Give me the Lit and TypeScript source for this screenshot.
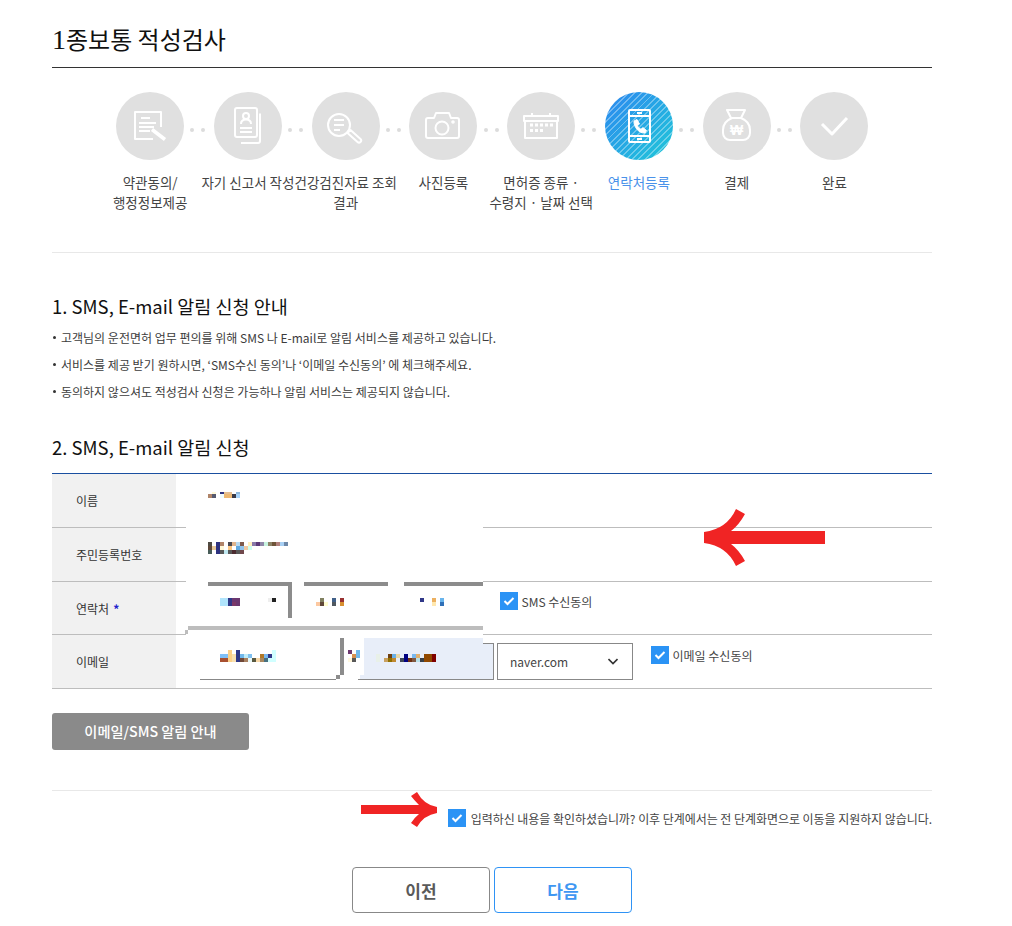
import { LitElement, html, css, svg } from "lit";
import { customElement } from "lit/decorators.js";

const ICONS = [
  svg`<path d="M37 47H19V20H45V35"/><path d="M25 26h9M23 31h17M23 35h15M23 39h11"/><path d="M36 37.500L49 47.500" stroke-width="3.500"/>`,
  svg`<rect x="21" y="16" width="22" height="29" rx="2"/><path d="M46 21.500V49a2 2 0 0 1-2 2H27"/><circle cx="32" cy="24" r="3"/><path d="M27 32c0-3.500 2-4.500 5-4.500s5 1 5 4.500"/><path d="M26 36h12M26 40h12"/>`,
  svg`<circle cx="27" cy="33" r="11"/><path d="M22 28h10M22 33h10M22 38h6"/><path d="M35.500 41l3-3 10 9a2 2 0 0 1-3 3z"/>`,
  svg`<path d="M19 26h6l2-5h13l2 5h6a2 2 0 0 1 2 2v16a2 2 0 0 1-2 2H19a2 2 0 0 1-2-2V28a2 2 0 0 1 2-2z"/><circle cx="33" cy="36" r="6.500"/><circle cx="44" cy="30" r=".8"/>`,
  svg`<path d="M18 29h32v17H18zM17 24h34v5H17zM25 21v4M43 21v4" /><path stroke-width="3" stroke-dasharray="3 2" d="M23 33h24M23 38.500h15"/>`,
  svg`<rect x="24" y="18" width="21" height="32" rx="1"/><path d="M24 24h21M24 44h21M32 47h5M32 21h5"/><path fill="#fff" stroke-width="1" d="M29 29l3-1.500 2.500 4.500-2 1.500c.6 1.700 1.800 3 3.500 3.800l1.800-1.800 3.700 3-1.500 2.500c-6 .5-11.500-6-11-12z"/>`,
  svg`<path d="M24 18h18l-4 8H28z"/><path d="M29 26h9c5 2 9 6 9 12v3a7 7 0 0 1-7 7H27a7 7 0 0 1-7-7v-3c0-6 4-10 9-12z"/><text x="33.500" y="42.500" font-size="14" font-weight="700" text-anchor="middle" fill="#fff" stroke="none" font-family="Liberation Sans, sans-serif">₩</text>`,
  svg`<path stroke-width="3" d="M22 32l10 10 15-16"/>`,
];

const STEPS = [
  ["약관동의/", "행정정보제공"],
  ["자기 신고서 작성"],
  ["건강검진자료 조회", "결과"],
  ["사진등록"],
  ["면허증 종류 ·", "수령지 · 날짜 선택"],
  ["연락처등록"],
  ["결제"],
  ["완료"],
];

type Row = [number, string];
const MOSAICS: Record<string, Row[]> = {
  name: [
    [2, "- fff8d8 - 2e3380 e3be93 e3be93 - 8fb8dc"],
    [4, "b08468 565a70 - f0fdff edb873 edb873 3a3a48 a8d3fa"],
  ],
  rrn: [
    [4, "4f4a42 - 2e3380 b08468 - 4a4a52 e0b48c b8d8ee 7d5a4c - fff0c0 8878a8 5c3a78 8f88a8 c8f4e0 8c8468 6e5438 b0807c a8d0f4 6e88a8"],
    [4, "5c4638 e8c898 2e3380 fff8d8 - fcc884 - 60a8e0 90c4ec f0c8a0 d0fff0"],
    [4, "485c58 - 2e3380 585858 c0e8f0 585858 4c2c30 585858 70484c"],
  ],
  p1: [
    [4, "b0e4fc b0e4fc 303888 6c3870 6c3870 - - - - - - - eeeeee 222222"],
    [4, "b0e4fc b0e4fc 303888 7c3868 6c3870"],
  ],
  p2: [
    [4, "- 808060 - - 406088 - 983030"],
    [4, "fcc8a0 604838 fffdd0 - 505860 - d89030"],
  ],
  p3: [
    [4, "303888 - - ecb060 - 68b4ec"],
    [4, "- - - ffe8b0 - 3070b8"],
  ],
  e1: [
    [4, "- - fcd088 - 303888 - - - - - - - - d0ffff"],
    [4, "80c0f8 80c0f8 fcd088 f8e0b0 303888 70b8ec c0ecf8 80c0f0 - - b07828 78b8f0 303888 d0ffff"],
    [4, "a85030 a85030 fcd088 f8e0b0 303888 704838 a88060 e8f8f8 585840 f8d8a8 a88860 487080 d0ffff d0ffff"],
  ],
  em: [
    [4, "6c3870 - 70b8ec"],
    [4, "- d89050 70b8ec"],
    [4, "fff8e0 585858"],
  ],
  e2: [
    [4, "e8f0e8 - - 704010 68b0e8 e8d8a8 - 000080 - 78b8f0 e0b070 - 904800 904800 800000"],
    [4, "e8f0e8 - c8a060 907000 c08830 - 404858 000080 703010 805840 b8e0e8 384048 904800 904800 800000"],
  ],
};

@customElement("app-root")
export class AppRoot extends LitElement {
  static styles = css`
    :host {
      display: block;
      font-family: "Noto Sans CJK KR", "Noto Sans", sans-serif;
      color: #333;
    }
    * { box-sizing: border-box; }
    .page { width: 880px; margin-left: 52px; height: 926px; position: relative; }
    h1 {
      margin: 0; height: 68px; padding-top: 21px;
      border-bottom: 1px solid #333;
      font-size: 24px; line-height: 36px; font-weight: 400; color: #111;
    }
    .one { font-family: "Liberation Serif", serif; font-size: 28px; line-height: 30px; }
    .steps {
      display: flex; justify-content: center;
      height: 185px; padding: 24px 0 0 0.6px;
      border-bottom: 1px solid #e8e8e8;
    }
    .step { width: 97.75px; position: relative; text-align: center; display: flex; flex-direction: column; align-items: center; }
    .step:not(:last-child)::after {
      content: ""; position: absolute; left: 89px; top: 36px;
      width: 4px; height: 4px; border-radius: 50%;
      background: #dcdcdc; box-shadow: 11px 0 0 #dcdcdc;
    }
    .circle { width: 68px; height: 68px; border-radius: 50%; background: #e0e0e0; }
    .circle svg { display: block; fill: none; stroke: #fff; stroke-width: 2; stroke-linejoin: round; }
    .active .circle {
      background:
        repeating-linear-gradient(135deg, transparent 0 3.200px, rgba(255,255,255,.34) 3.200px 4.500px),
        linear-gradient(135deg, #2c86f0, #1fc9d8);
    }
    .label { margin-top: 13px; font-size: 13.500px; line-height: 19.500px; color: #444; white-space: nowrap; }
    .active .label { color: #4a92ea; }
    h2 { margin: 0; font-size: 18.500px; line-height: 26px; font-weight: 400; color: #111; }
    .h-a { margin-top: 40px; }
    ul { list-style: none; margin: 5px 0 0; padding: 0; }
    li { position: relative; padding-left: 9px; font-size: 12px; line-height: 27px; color: #3c3c3c; }
    li::before {
      content: ""; position: absolute; left: 1px; top: 12px;
      width: 3px; height: 3px; border-radius: 50%; background: #333;
    }
    .h-b { margin-top: 29px; margin-bottom: 13px; }
    .table { border-top: 1px solid #1a4fa0; position: relative; }
    .row { display: flex; height: 54px; border-bottom: 1px solid #bdbdbd; }
    .row.short { height: 53px; }
    .th { width: 124px; background: #f1f1f1; padding-left: 24px; display: flex; align-items: center; font-size: 12px; color: #333; }
    .th b { color: #22c; font-weight: 700; margin-left: 4px; }
    .td { flex: 1; display: flex; align-items: flex-start; padding-left: 24px; padding-top: 8px; font-size: 12px; }
    .phones { width: 300px; flex: none; }
    .chk { width: 18px; height: 18px; background: #2b93f5; flex: none; display: block; }
    .chk svg { display: block; fill: none; stroke: #fff; stroke-width: 2; }
    .opt { display: flex; align-items: center; gap: 3.500px; font-size: 12px; color: #444; }
    .opt-s { margin-top: 2px; }
    .opt-e { margin-left: 18px; margin-top: 3px; }
    .input { width: 136px; height: 37px; border: 1px solid #888; flex: none; }
    .input.b { margin-left: 22px; background: #e8eef9; }
    .select {
      margin-left: 3px; width: 136px; height: 37px; border: 1px solid #888; flex: none;
      display: flex; align-items: center; justify-content: space-between;
      padding: 0 14px 0 12px; font-size: 12px; color: #444;
    }
    .select svg { fill: none; stroke: #333; stroke-width: 1.600; display: block; }

    /* redaction layer lying over the form */
    .w { position: absolute; background: #fff; }
    .w1 { left: 134px; top: 0; width: 297px; height: 164px; }
    .w2 { left: 134px; top: 164px; width: 178px; height: 37px; }
    .w3 { left: 134px; top: 201px; width: 174px; height: 4px; }
    .blue { position: absolute; left: 312px; top: 164px; width: 119px; height: 6px; background: #e8eef9; }
    .bar { position: absolute; background: #8c8c8c; }
    .b1 { left: 156px; top: 108px; width: 84px; height: 4px; }
    .b2 { left: 236px; top: 108px; width: 4px; height: 36px; }
    .b3 { left: 252px; top: 108px; width: 84px; height: 4px; }
    .b4 { left: 352px; top: 108px; width: 79px; height: 4px; }
    .b5 { left: 288px; top: 164px; width: 4px; height: 37px; }
    .b6 { left: 284px; top: 201px; width: 4px; height: 4px; }
    .b7 { left: 136px; top: 152px; width: 295px; height: 4px; background: #bdbdbd; }
    .b8 { left: 133px; top: 156px; width: 3px; height: 4px; background: #bdbdbd; }
    .mosaic { position: absolute; }
    .mrow { display: flex; }
    .mrow span { width: 4px; flex: none; }
    .m-name { left: 156px; top: 18px; }
    .m-rrn { left: 156px; top: 68px; }
    .m-p1 { left: 168px; top: 124px; }
    .m-p2 { left: 264px; top: 124px; }
    .m-p3 { left: 368px; top: 124px; }
    .m-e1 { left: 168px; top: 176px; }
    .m-em { left: 296px; top: 176px; }
    .m-e2 { left: 324px; top: 180px; }

    .arrow { position: absolute; left: 0; top: 0; width: 880px; height: 926px; pointer-events: none; }
    .arrow path { fill: #f02424; }

    .notice {
      display: block; margin-top: 24px; width: 197px; height: 37px; border-radius: 3px;
      background: #8a8a8a; color: #fff; font-size: 14.200px; font-weight: 500;
      text-align: center; line-height: 36px;
    }
    .consent {
      margin-top: 40px; border-top: 1px solid #e8e8e8; padding-top: 18px;
      display: flex; justify-content: flex-end; align-items: center; gap: 4.500px;
      font-size: 12px; letter-spacing: -0.050px; color: #444; white-space: nowrap;
    }
    .actions { display: flex; justify-content: center; gap: 4px; margin-top: 40px; }
    .btn {
      width: 138px; height: 46px; border-radius: 4px; background: #fff;
      border: 1px solid #888; color: #5a5a5a;
      display: flex; align-items: center; justify-content: center;
      font-size: 17px; font-weight: 700;
    }
    .btn.next { border-color: #2f93f5; color: #3f97f2; }
  `;

  private chk() {
    return html`<span class="chk"><svg width="18" height="18" viewBox="0 0 18 18"><path d="M4.500 9l3 3 6-6"/></svg></span>`;
  }

  private mosaic(key: string) {
    return html`<div class="mosaic m-${key}">
      ${MOSAICS[key].map(
        ([h, cells]) => html`<div class="mrow" style="height:${h}px">
          ${cells.split(" ").map((c) => html`<span style="background:${c === "-" ? "transparent" : "#" + c}"></span>`)}
        </div>`
      )}
    </div>`;
  }

  render() {
    return html`<div class="page">
      <h1><span class="one">1</span>종보통 적성검사</h1>
      <div class="steps">
        ${STEPS.map(
          (lines, i) => html`<div class="step ${i === 5 ? "active" : ""}">
            <div class="circle"><svg width="68" height="68" viewBox="0 0 68 68">${ICONS[i]}</svg></div>
            <div class="label">${lines.map((l) => html`<div>${l}</div>`)}</div>
          </div>`
        )}
      </div>
      <h2 class="h-a">1. SMS, E-mail 알림 신청 안내</h2>
      <ul>
        <li>고객님의 운전면허 업무 편의를 위해 SMS 나 E-mail로 알림 서비스를 제공하고 있습니다.</li>
        <li>서비스를 제공 받기 원하시면, ‘SMS수신 동의’나 ‘이메일 수신동의’ 에 체크해주세요.</li>
        <li>동의하지 않으셔도 적성검사 신청은 가능하나 알림 서비스는 제공되지 않습니다.</li>
      </ul>
      <h2 class="h-b">2. SMS, E-mail 알림 신청</h2>
      <div class="table">
        <div class="row"><div class="th">이름</div><div class="td"></div></div>
        <div class="row"><div class="th">주민등록번호</div><div class="td"></div></div>
        <div class="row short">
          <div class="th">연락처<b>*</b></div>
          <div class="td"><div class="phones"></div><div class="opt opt-s">${this.chk()}SMS 수신동의</div></div>
        </div>
        <div class="row">
          <div class="th">이메일</div>
          <div class="td">
            <div class="input"></div>
            <div class="input b"></div>
            <div class="select">naver.com<svg width="10" height="7" viewBox="0 0 10 7"><path d="M.5 1L5 5.500 9.500 1"/></svg></div>
            <div class="opt opt-e">${this.chk()}이메일 수신동의</div>
          </div>
        </div>
        <div class="w w1"></div><div class="w w2"></div><div class="w w3"></div>
        <div class="blue"></div>
        <div class="bar b1"></div><div class="bar b2"></div><div class="bar b3"></div><div class="bar b4"></div>
        <div class="bar b5"></div><div class="bar b6"></div><div class="bar b7"></div><div class="bar b8"></div>
        ${Object.keys(MOSAICS).map((k) => this.mosaic(k))}
      </div>
      <div class="notice">이메일/SMS 알림 안내</div>
      <div class="consent">${this.chk()}입력하신 내용을 확인하셨습니까? 이후 단계에서는 전 단계화면으로 이동을 지원하지 않습니다.</div>
      <div class="actions">
        <div class="btn">이전</div>
        <div class="btn next">다음</div>
      </div>
      <svg class="arrow" viewBox="52 0 880 926">
        <path d="M704 532Q727 529 736 509L745 514Q739 525 731 531H825V544H731Q739 550 745 561L736 566Q727 546 704 543Z"/>
        <path d="M361 805H419Q414 800 411 796L417 792Q424 805 437 807V813Q424 815 417 827L411 823Q414 818 419 814H361Z"/>
      </svg>
    </div>`;
  }
}
